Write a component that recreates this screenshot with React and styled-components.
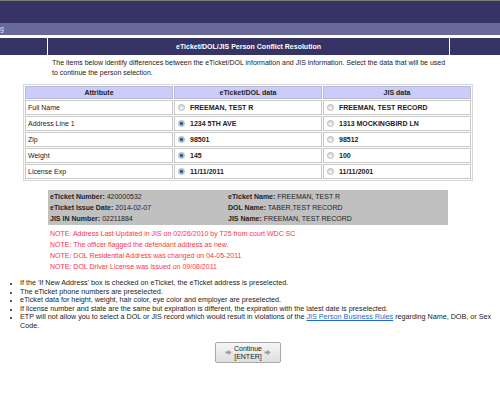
import React from "react";
import styled, { createGlobalStyle } from "styled-components";

const Global = createGlobalStyle`
  html, body { margin: 0; padding: 0; background: #fff; }
  body { font-family: "Liberation Sans", Arial, sans-serif; color: #222; }
`;

const Page = styled.div`
  width: 500px;
  height: 394px;
  overflow: hidden;
  display: flex;
  flex-direction: column;
`;

const TopBar = styled.div`
  height: 22px;
  border-top: 1px solid #7c7b72;
  background: #363464;
`;

const SubBar = styled.div`
  height: 12px;
  background: #686899;
  color: #e4e4f4;
  font-size: 7px;
  line-height: 12px;
  padding-left: 0;
`;

const TitleRow = styled.div`
  margin-top: 3px;
  display: grid;
  grid-template-columns: 47px 1fr 50px;
  gap: 1px;
  background: #fff;
  height: 17px;
`;

const TitleCell = styled.div`
  background: #363464;
  color: #fff;
  font-weight: bold;
  font-size: 7px;
  display: flex;
  align-items: center;
  justify-content: center;
`;

const Main = styled.div`
  width: 496px;
  display: flex;
  flex-direction: column;
  align-items: center;
`;

const Intro = styled.p`
  width: 396px;
  padding-left: 4px;
  margin: 3px 0 0;
  font-size: 7px;
  line-height: 10px;
  color: #222;
`;

const Table = styled.table`
  margin-top: 6px;
  width: 450px;
  border: 1px solid #d8d8d8;
  border-spacing: 1px;
  font-size: 7px;
  table-layout: fixed;
`;

const Th = styled.th`
  height: 11px;
  background: #ccccfa;
  border: 1px solid #b8b8d8;
  font-weight: bold;
  color: #222;
  padding: 0;
`;

const Td = styled.td`
  height: 13px;
  border: 1px solid #c8c8c8;
  padding: 0 0 0 ${(p) => (p.$value ? "3px" : "2px")};
  font-weight: ${(p) => (p.$value ? "bold" : "normal")};
  color: #222;
  white-space: nowrap;
`;

const ValueWrap = styled.span`
  display: flex;
  align-items: center;
  gap: 5px;
`;

const Radio = styled.span`
  width: 5px;
  height: 5px;
  border-radius: 50%;
  border: 1px solid #b4b4b4;
  background: ${(p) =>
    p.$checked
      ? "radial-gradient(circle, #1f5f9f 0 1.3px, #9cbcd8 1.8px, #e8eef4 100%)"
      : "linear-gradient(#dcdcdc, #f6f6f6)"};
  flex: none;
`;

const InfoBox = styled.div`
  margin-top: 9px;
  width: 396px;
  padding: 1px 2px;
  background: #c0c0c0;
  display: grid;
  grid-template-columns: 178px 1fr;
  font-size: 7px;
  line-height: 11px;
  color: #222;
`;

const Label = styled.b`
  font-weight: bold;
`;

const Notes = styled.div`
  width: 398px;
  padding-left: 2px;
  margin-top: 3px;
  font-size: 7px;
  line-height: 11px;
  color: #ff3346;
`;

const Bullets = styled.ul`
  margin: 7px 0 0;
  padding: 0 0 0 20px;
  width: 476px;
  font-size: 7.2px;
  line-height: 8.5px;
  color: #222;
  li::marker { font-size: 6px; }
`;

const Link = styled.a`
  color: #1a6ad0;
  text-decoration: underline;
`;

const ButtonRow = styled.div`
  display: flex;
  justify-content: center;
  margin-top: 12px;
  width: 496px;
`;

const Button = styled.button`
  width: 66px;
  height: 21px;
  border: 1px solid #a8a8a8;
  border-radius: 2px;
  background: linear-gradient(#f6f6f6, #dedede);
  display: flex;
  align-items: center;
  justify-content: center;
  gap: 2px;
  padding: 0;
  font-family: "Liberation Sans", Arial, sans-serif;
  font-size: 7px;
  line-height: 7.5px;
  color: #222;
`;

const BtnText = styled.span`
  display: flex;
  flex-direction: column;
  align-items: center;
`;

const Arrow = () => (
  <svg width="7" height="7" viewBox="0 0 6 6">
    <path d="M0.5 2.1h2.3V0.7L5.6 3 2.8 5.3V3.9H0.5z" fill="#9a9a9a" />
  </svg>
);

const rows = [
  ["Full Name", "FREEMAN, TEST R", "FREEMAN, TEST RECORD", 0],
  ["Address Line 1", "1234 5TH AVE", "1313 MOCKINGBIRD LN", 1],
  ["Zip", "98501", "98512", 1],
  ["Weight", "145", "100", 1],
  ["License Exp", "11/11/2011", "11/11/2001", 1],
];

export default function App() {
  return (
    <Page>
      <Global />
      <TopBar />
      <SubBar>g</SubBar>
      <TitleRow>
        <TitleCell />
        <TitleCell>eTicket/DOL/JIS Person Conflict Resolution</TitleCell>
        <TitleCell />
      </TitleRow>
      <Main>
        <Intro>
          The items below identify differences between the eTicket/DOL information and JIS
          information. Select the data that will be used to continue the person selection.
        </Intro>
        <Table>
          <thead>
            <tr>
              <Th>Attribute</Th>
              <Th>eTicket/DOL data</Th>
              <Th>JIS data</Th>
            </tr>
          </thead>
          <tbody>
            {rows.map(([label, a, b, sel]) => (
              <tr key={label}>
                <Td>{label}</Td>
                <Td $value>
                  <ValueWrap>
                    <Radio $checked={sel === 1} />
                    {a}
                  </ValueWrap>
                </Td>
                <Td $value>
                  <ValueWrap>
                    <Radio $checked={sel === 2} />
                    {b}
                  </ValueWrap>
                </Td>
              </tr>
            ))}
          </tbody>
        </Table>
        <InfoBox>
          <span><Label>eTicket Number:</Label> 420000532</span>
          <span><Label>eTicket Name:</Label> FREEMAN, TEST R</span>
          <span><Label>eTicket Issue Date:</Label> 2014-02-07</span>
          <span><Label>DOL Name:</Label> TABER,TEST RECORD</span>
          <span><Label>JIS IN Number:</Label> 02211884</span>
          <span><Label>JIS Name:</Label> FREEMAN, TEST RECORD</span>
        </InfoBox>
        <Notes>
          <div>NOTE: Address Last Updated in JIS on 02/26/2010 by T25 from court WDC SC</div>
          <div>NOTE: The officer flagged the defendant address as new.</div>
          <div>NOTE: DOL Residential Address was changed on 04-05-2011</div>
          <div>NOTE: DOL Driver License was issued on 09/08/2011</div>
        </Notes>
      </Main>
      <Bullets>
        <li>If the 'If New Address' box is checked on eTicket, the eTicket address is preselected.</li>
        <li>The eTicket phone numbers are preselected.</li>
        <li>eTicket data for height, weight, hair color, eye color and employer are preselected.</li>
        <li>If license number and state are the same but expiration is different, the expiration with the latest date is preselected.</li>
        <li>
          ETP will not allow you to select a DOL or JIS record which would result in violations of the{" "}
          <Link href="#">JIS Person Business Rules</Link> regarding Name, DOB, or Sex Code.
        </li>
      </Bullets>
      <ButtonRow>
        <Button>
          <Arrow />
          <BtnText>
            <span>Continue</span>
            <span>[ENTER]</span>
          </BtnText>
          <Arrow />
        </Button>
      </ButtonRow>
    </Page>
  );
}
